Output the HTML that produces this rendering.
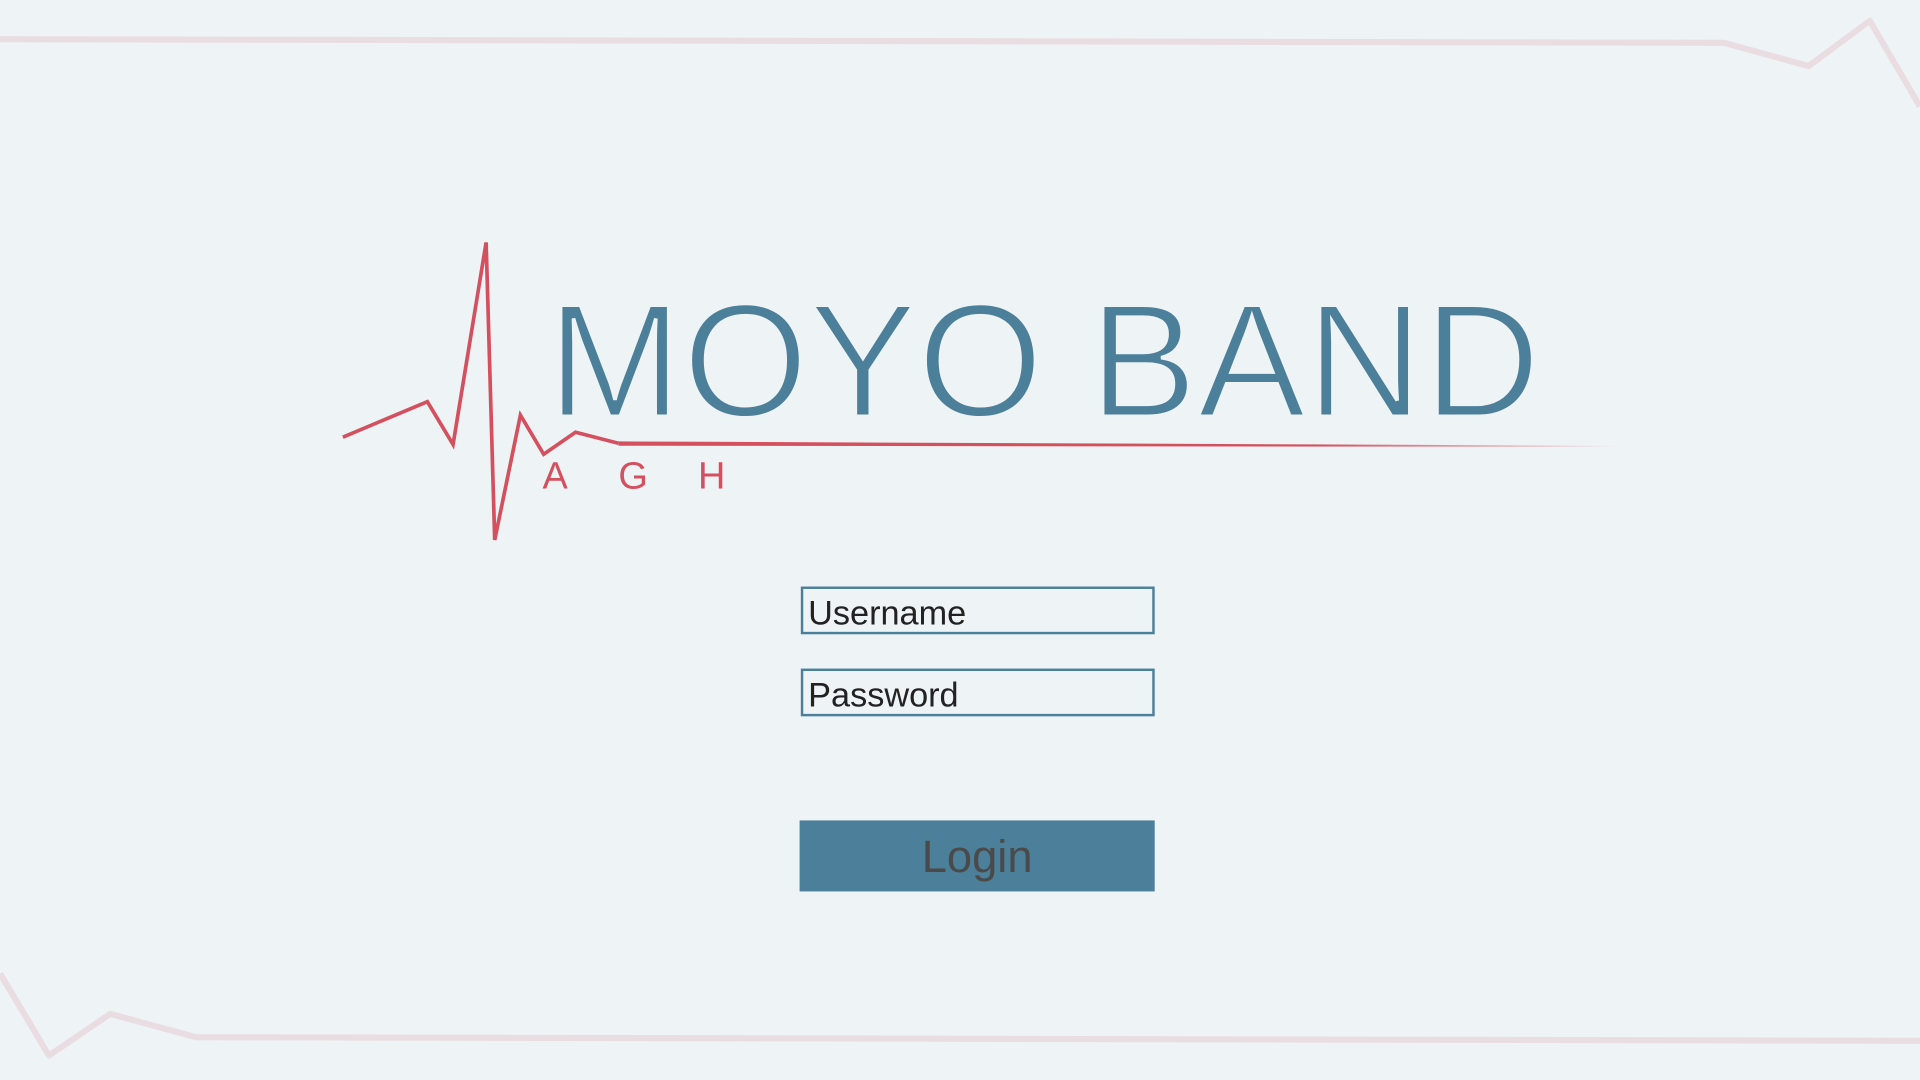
<!DOCTYPE html>
<html><head><meta charset="utf-8"><style>
html,body{margin:0;padding:0;background:#eef3f5;overflow:hidden}
svg{display:block}
</style></head><body>
<svg width="1920" height="1080" viewBox="0 0 1568 882" preserveAspectRatio="none" xmlns="http://www.w3.org/2000/svg">
<defs><linearGradient id="g" x1="0" x2="1"><stop offset="0" stop-color="#d4505f"/><stop offset="0.7" stop-color="#d4505f"/><stop offset="1" stop-color="#d4505f" stop-opacity="0"/></linearGradient></defs>
<rect width="1568" height="882" fill="#eef3f5"/>
<polyline points="0,32 1408,35 1477,54 1527,17 1568,87" fill="none" stroke="#eadde1" stroke-width="5" stroke-linejoin="round"/>
<polyline points="0,795 40,862 90,828 160,847 1568,850" fill="none" stroke="#eadde1" stroke-width="5" stroke-linejoin="round"/>
<text x="447" y="340" font-family="Liberation Sans, sans-serif" font-size="132" fill="#4c7f99" stroke="#eef3f5" stroke-width="3" textLength="811" lengthAdjust="spacing">MOYO BAND</text>
<polyline points="280,357 349,328 370,363 397,198 404,441 425,339 444,371 470,353 505,362" fill="none" stroke="#d4505f" stroke-width="3" stroke-linejoin="miter"/>
<path d="M505,360.5 L1320,364 L1320,365 L505,364 Z" fill="url(#g)"/>
<g font-family="Liberation Sans, sans-serif" font-size="31" fill="#d4505f">
<text x="443" y="399">A</text><text x="505" y="399">G</text><text x="570" y="399">H</text></g>
<rect x="655" y="480" width="287" height="37" fill="#eef3f5" stroke="#4c7f99" stroke-width="2"/>
<rect x="655" y="547" width="287" height="37" fill="#eef3f5" stroke="#4c7f99" stroke-width="2"/>
<g font-family="Liberation Sans, sans-serif" font-size="28" fill="#222">
<text x="660" y="510">Username</text><text x="660" y="577">Password</text></g>
<rect x="653" y="670" width="290" height="58" fill="#4c7f99"/>
<text x="798" y="712" text-anchor="middle" font-family="Liberation Sans, sans-serif" font-size="37" fill="#4a4a4a">Login</text>
</svg>
</body></html>
